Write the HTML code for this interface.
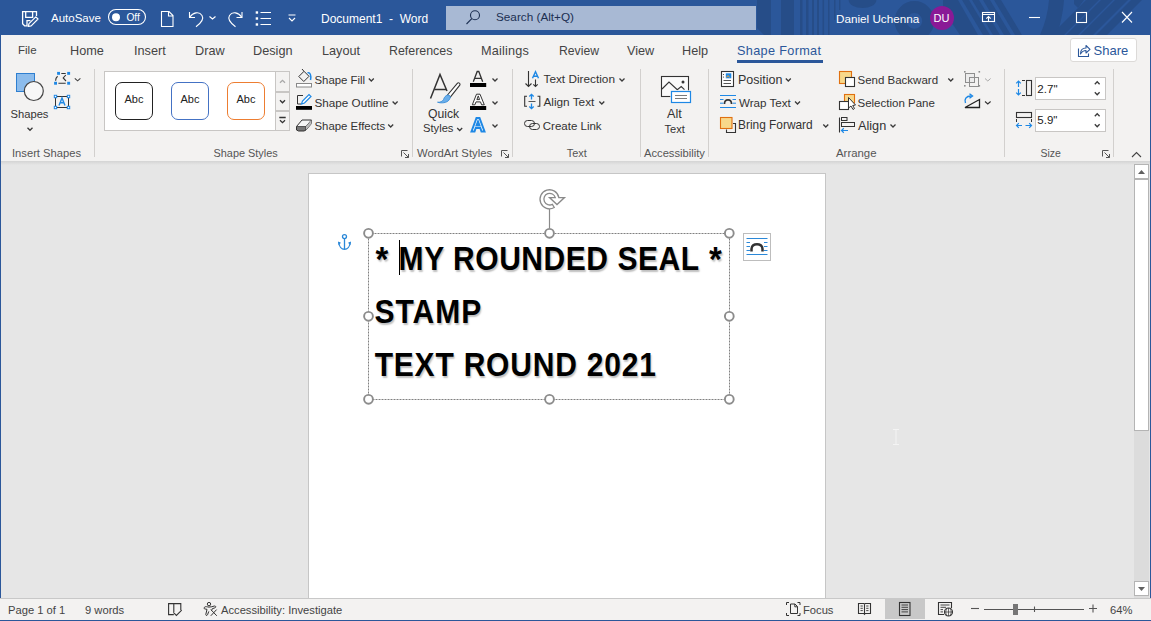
<!DOCTYPE html>
<html><head><meta charset="utf-8">
<style>
*{box-sizing:border-box}
html,body{margin:0;padding:0;width:1151px;height:621px;overflow:hidden;background:#e6e6e6;font-family:"Liberation Sans",sans-serif}
.a{position:absolute}
.t{position:absolute;white-space:pre;line-height:1}
#title{left:0;top:0;width:1151px;height:35px;background:#2b579a}
#tabs{left:1px;top:35px;width:1149px;height:32px;background:#f3f2f1}
#ribbon{left:1px;top:67px;width:1149px;height:94px;background:#f3f2f1}
#shadow{left:1px;top:161px;width:1149px;height:4px;background:linear-gradient(#d4d4d4,#e6e6e6)}
#status{left:0;top:598px;width:1151px;height:23px;background:#f3f2f1;border-top:1px solid #c8c8c8;border-bottom:1px solid #2b579a}
.wt{color:#fff}
.tab{color:#444;font-size:12.7px;top:45px !important}
.rb{color:#333;font-size:11.5px}
.gl{color:#555;font-size:11.2px}
.st{color:#444;font-size:11.2px}
.tx{font-size:30px;font-weight:bold;color:#000;text-shadow:1.2px 1.5px 1.5px rgba(0,0,0,0.25);transform:scaleY(1.08);transform-origin:0 25.4px}
.sep{position:absolute;width:1px;background:#d2d0ce}
svg{position:absolute;overflow:visible}
</style></head><body>
<div class="a" style="left:0;top:0;width:1px;height:621px;background:#2b579a"></div>
<div class="a" style="left:1150px;top:0;width:1px;height:621px;background:#2b579a"></div>

<!-- TITLE BAR -->
<div id="title" class="a"></div>
<svg style="left:0;top:0" width="1151" height="35">
 <g fill="#264d88">
  <path d="M757,0 H771 V35 H764 L757,28 Z"/><rect x="781" y="0" width="13" height="35"/>
  <rect x="800" y="0" width="2.5" height="35"/><rect x="806" y="0" width="2.5" height="35"/>
  <rect x="812" y="0" width="2" height="35"/><rect x="817" y="0" width="2" height="35"/>
  <rect x="822.5" y="0" width="1.6" height="35"/><rect x="828" y="0" width="1.5" height="35"/>
  <rect x="834" y="0" width="1.5" height="20"/><rect x="839" y="0" width="1.4" height="10"/>
  <path d="M848.6,0 A13.9,8 0 0 0 876.4,0 Z"/>
 </g>
 <circle cx="914.4" cy="20.9" r="13.8" fill="none" stroke="#264d88" stroke-width="12"/>
 <g fill="#264d88">
  <path d="M943,0 H958 L978,35 H960 L943,10 Z"/>
  <path d="M962,0 H969 L990,35 H983 Z"/><path d="M972,0 H979 L1000,35 H993 Z"/>
  <path d="M983,0 H990 L1011,35 H1004 Z"/><path d="M994,0 H1001 L1022,35 H1015 Z"/>
  <path d="M1049,0 H1064 C1063,14 1060,25 1057,35 H1040 C1045,24 1048,12 1049,0 Z"/>
  <path d="M1074,0 H1084 L1078,8 L1074,4 Z"/>
  <path d="M1086,0 H1099 L1064,35 H1051 Z"/><path d="M1101,0 H1113 L1078,35 H1066 Z"/>
  <path d="M1115,0 H1128 L1093,35 H1080 Z"/><path d="M1131,0 H1142 L1107,35 H1096 Z"/>
 </g>
</svg>
<div class="a" id="search" style="left:446px;top:6px;width:310px;height:24px;background:#a8b9d4"></div>
<svg style="left:0;top:0" width="1151" height="35" fill="none" stroke="#fff" stroke-width="1.1">
 <!-- save icon -->
 <path d="M36.5,16 V11.6 H22.6 V23.8 L24.6,25.8 H27 V20.6 H30.5" stroke-width="1.3"/>
 <path d="M25.7,11.8 V17.3 H32.6 V11.8" stroke-width="1.3"/>
 <path d="M28.2,26.4 L29,23.6 L35.8,16.8 L38,19 L31.2,25.8 Z" stroke-width="1.2" stroke-linejoin="round"/>
 <!-- toggle -->
 <rect x="108.5" y="9.5" width="37" height="15" rx="7.5" />
 <circle cx="116" cy="17.2" r="4" fill="#fff" stroke="none"/>
 <!-- new doc -->
 <path d="M161.5,11.5 H169 L173,15.5 V26.5 H161.5 Z M168.5,11.5 V16 H173" />
 <!-- undo -->
 <path d="M189.5,12 V17.5 H195" />
 <path d="M189.8,17.3 C193,12.5 199,11 202,15.5 C204.5,19.5 201,23 196,26.7" />
 <path d="M209.5,16.5 L212.5,19 L215.5,16.5" />
 <!-- redo -->
 <path d="M242,12 V17.5 H236.5" />
 <path d="M241.7,17.3 C238.5,12.5 232.5,11 229.5,15.5 C227,19.5 230.5,23 235.5,26.7" />
 <!-- list -->
 <path d="M260.5,12.5 H271 M260.5,18.5 H271 M260.5,24.5 H271" />
 <rect x="255.7" y="11.3" width="2.4" height="2.4" fill="#fff" stroke="none"/>
 <rect x="255.7" y="17.3" width="2.4" height="2.4" fill="#fff" stroke="none"/>
 <rect x="255.7" y="23.3" width="2.4" height="2.4" fill="#fff" stroke="none"/>
 <!-- customize -->
 <path d="M288.5,15 H295.5 M289,18 L292,21 L295,18" />
 <!-- search magnifier -->
 <g stroke="#1c2f52"><circle cx="475" cy="15.3" r="4.5"/><path d="M471.8,18.6 L466.5,24" /></g>
 <!-- display options -->
 <rect x="982.5" y="12.5" width="12" height="9" />
 <path d="M982.5,14.5 H994.5 M988.5,16.5 V21.5 M986.3,18.7 L988.5,16.5 L990.7,18.7" />
 <!-- min max close -->
 <path d="M1029,17.5 H1040" />
 <rect x="1076.5" y="12.5" width="10" height="10" />
 <path d="M1122,12 L1132,22.5 M1132,12 L1122,22.5" />
</svg>
<div class="t wt" style="left:126.4px;top:12.6px;font-size:10.2px">Off</div>
<div class="a" style="left:930px;top:6px;width:24px;height:24px;border-radius:50%;background:#8a1a96"></div>
<div class="t wt" style="left:933.5px;top:12.7px;font-size:11px">DU</div>
<div class="t wt" style="left:51px;top:13px;font-size:11.5px">AutoSave</div>
<div class="t wt" style="left:321px;top:13.3px;font-size:12px">Document1  -  Word</div>
<div class="t" style="left:496px;top:11.3px;font-size:11.75px;color:#1c2f52">Search (Alt+Q)</div>
<div class="t wt" style="left:836px;top:12.5px;font-size:11.7px">Daniel Uchenna</div>

<!-- TABS -->
<div id="tabs" class="a"></div>
<div class="t tab" style="left:18px;top:44px;font-size:11.5px">File</div>
<div class="t tab" style="left:70px;top:44px">Home</div>
<div class="t tab" style="left:134px;top:44px">Insert</div>
<div class="t tab" style="left:195px;top:44px">Draw</div>
<div class="t tab" style="left:253px;top:44px">Design</div>
<div class="t tab" style="left:322px;top:44px">Layout</div>
<div class="t tab" style="left:389px;top:44px;font-size:12.4px">References</div>
<div class="t tab" style="left:481px;top:44px;letter-spacing:0.2px">Mailings</div>
<div class="t tab" style="left:559px;top:44px;font-size:12.2px">Review</div>
<div class="t tab" style="left:627px;top:44px">View</div>
<div class="t tab" style="left:682px;top:44px">Help</div>
<div class="t tab" style="left:737px;top:44px;color:#2b579a;letter-spacing:0.33px">Shape Format</div>
<div class="a" style="left:737px;top:60px;width:86px;height:3px;background:#2b579a"></div>

<!-- RIBBON -->
<div id="ribbon" class="a"></div>
<div id="shadow" class="a"></div>
<!-- separators -->
<div class="sep" style="left:94px;top:69px;height:88px"></div>
<div class="sep" style="left:412px;top:69px;height:88px"></div>
<div class="sep" style="left:512px;top:69px;height:88px"></div>
<div class="sep" style="left:640px;top:69px;height:88px"></div>
<div class="sep" style="left:708px;top:69px;height:88px"></div>
<div class="sep" style="left:1004px;top:69px;height:88px"></div>
<div class="sep" style="left:1113px;top:69px;height:88px"></div>

<!-- Insert Shapes group -->
<svg style="left:0;top:60px" width="100" height="100">
 <rect x="16.5" y="13.5" width="18" height="18" fill="#8cbcec" stroke="#2e7fd0" stroke-width="1"/>
 <circle cx="33.8" cy="31" r="9.5" fill="#f7f7f7" stroke="#444" stroke-width="1.2"/>
 <path d="M27.5,67.8 L30,70.3 L32.5,67.8" fill="none" stroke="#3a3a3a" stroke-width="1.3"/>
 <!-- edit shape -->
 <path d="M61.3,13.5 H65.7 M58.4,23.3 H65.7 M57.6,16.2 C56,17.5 55.6,19 55.6,20.8 M65.8,15 L63.2,18 L66,21" fill="none" stroke="#333" stroke-width="1.1"/>
 <g fill="#1e88e5"><rect x="57.1" y="11.9" width="2.9" height="2.9"/><rect x="67.2" y="11.9" width="2.9" height="2.9"/><rect x="54.1" y="21.8" width="2.9" height="2.9"/><rect x="67.2" y="21.8" width="2.9" height="2.9"/></g>
 <path d="M74.8,18.3 L77.6,20.8 L80.4,18.3" fill="none" stroke="#444" stroke-width="1.1"/>
 <!-- text box -->
 <rect x="55.5" y="36.5" width="13" height="11" fill="none" stroke="#333" stroke-width="1"/>
 <g fill="#fff" stroke="#1e88e5" stroke-width="1"><rect x="54.3" y="35.3" width="2.4" height="2.4"/><rect x="67.3" y="35.3" width="2.4" height="2.4"/><rect x="54.3" y="46.3" width="2.4" height="2.4"/><rect x="67.3" y="46.3" width="2.4" height="2.4"/></g>
 <path d="M59,45.5 L62,38 L65,45.5 M60.2,42.8 H63.8" fill="none" stroke="#1e88e5" stroke-width="1.4"/>
</svg>
<div class="t rb" style="left:10.5px;top:108.5px;font-size:11.2px">Shapes</div>
<div class="t gl" style="left:12px;top:147.5px;font-size:11.2px">Insert Shapes</div>

<!-- Shape Styles group -->
<div class="a" style="left:104px;top:71px;width:186px;height:60px;background:#fff;border:1px solid #c8c6c4"></div>
<div class="a" style="left:275px;top:71px;width:15px;height:21px;border:1px solid #c8c6c4;background:#f3f2f1"></div>
<div class="a" style="left:275px;top:92px;width:15px;height:19px;border:1px solid #c8c6c4;background:#f3f2f1"></div>
<div class="a" style="left:275px;top:111px;width:15px;height:20px;border:1px solid #c8c6c4;background:#f3f2f1"></div>
<svg style="left:0;top:60px" width="300" height="100" fill="none">
 <path d="M280,22.8 L282.5,20.3 L285,22.8" stroke="#a8a8a8" stroke-width="1.3"/>
 <path d="M280,40.3 L282.5,42.8 L285,40.3" stroke="#333" stroke-width="1.3"/>
 <path d="M279.3,57.5 H285.7 M280,60.2 L282.5,62.7 L285,60.2" stroke="#333" stroke-width="1.3"/>
</svg>
<div class="a" style="left:115px;top:82px;width:38px;height:38px;border:1.6px solid #222;border-radius:7px"></div>
<div class="a" style="left:171px;top:82px;width:38px;height:38px;border:1.4px solid #4472c4;border-radius:7px"></div>
<div class="a" style="left:227px;top:82px;width:38px;height:38px;border:1.4px solid #ed7d31;border-radius:7px"></div>
<div class="t" style="left:124.5px;top:94px;font-size:11px;color:#222">Abc</div>
<div class="t" style="left:180.5px;top:94px;font-size:11px;color:#222">Abc</div>
<div class="t" style="left:236.5px;top:94px;font-size:11px;color:#222">Abc</div>

<svg style="left:0;top:60px" width="420" height="100" fill="none">
 <!-- shape fill -->
 <path d="M298.8,16.5 L304,11.3 L309,16.3 L303.8,21.5 Z" stroke="#333" stroke-width="1"/>
 <path d="M304,11.3 L302,9" stroke="#333" stroke-width="1"/>
 <path d="M307.5,13 C310,12 311.5,15 310.5,20" stroke="#1e88e5" stroke-width="1.5"/>
 <rect x="296.5" y="23.5" width="15" height="3.5" fill="#fff" stroke="#888" stroke-width="1"/>
 <!-- shape outline -->
 <path d="M303,95.5 H297.5 V104 H301" transform="translate(0,-60)" stroke="#333" stroke-width="1"/>
 <path d="M301.5,44 L302.5,41 L309,34.5 L311,36.5 L304.5,43 Z" fill="#fff" stroke="#1e88e5" stroke-width="1.2"/>
 <rect x="296" y="46" width="16" height="3.8" fill="#000"/>
 <!-- shape effects -->
 <path d="M296.5,66.5 L302,60 H311.5 L306,66.5 Z" fill="#f5f5f5" stroke="#333" stroke-width="1"/>
 <path d="M296.5,66.5 V70 L298.5,71 H304 L306,70 V66.5" fill="#777" stroke="#333" stroke-width="1"/>
 <path d="M306,70 L311.5,63.5 V60" fill="#bbb" stroke="#333" stroke-width="1"/>
 <path d="M306,66.5 L311.5,60 V63.5 L306,70 Z" fill="#bbb" stroke="none"/>
 <!-- chevrons -->
 <path d="M368.8,18.5 L371.3,21 L373.8,18.5 M392.6,41.5 L395.1,44 L397.6,41.5 M388.2,64.5 L390.7,67 L393.2,64.5" stroke="#3a3a3a" stroke-width="1.3"/>
 <!-- launcher -->
 <path d="M401.5,96.5 V90.5 H407.5 M403.5,92.5 L408.5,97.5 M408.5,94 V97.5 H405" stroke="#555" stroke-width="1"/>
</svg>
<div class="t rb" style="left:314.5px;top:74.65px;font-size:11.4px">Shape Fill</div>
<div class="t rb" style="left:314.5px;top:97.4px;font-size:11.7px">Shape Outline</div>
<div class="t rb" style="left:314.5px;top:120.65px;font-size:11.4px">Shape Effects</div>
<div class="t gl" style="left:213.5px;top:147.5px;font-size:10.9px">Shape Styles</div>

<!-- WordArt group -->
<svg style="left:0;top:60px" width="520" height="100" fill="none">
 <path d="M430.5,38.5 L440,14.5 L447,31" stroke="#333" stroke-width="1.5"/>
 <path d="M434.5,29.5 H446" stroke="#333" stroke-width="1.5"/>
 <path d="M447.5,35 L457.3,23.3 C458.5,22 460.8,23.6 459.8,25.2 L450.3,37.2 Z" fill="#fff" stroke="#333" stroke-width="1.1" stroke-linejoin="round"/>
 <path d="M449.5,35.5 C447,34 444.5,36.5 443.5,39.5 C442.5,41.5 440,42.5 437.5,42.2 C441,43.5 447,43 449,40 C450.5,38 450.8,36.5 449.5,35.5 Z" fill="#6aaeea" stroke="#2e86d6" stroke-width="0.8"/>
 <path d="M457.2,68 L459.7,70.5 L462.2,68" stroke="#3a3a3a" stroke-width="1.3"/>
 <!-- A1 -->
 <path d="M473.3,21.8 L477.2,11.5 H478.8 L482.7,21.8 M475,18.3 H481" stroke="#333" stroke-width="1.3"/>
 <rect x="470" y="23" width="16.2" height="4" fill="#000"/>
 <!-- A2 outlined -->
 <path d="M472.3,44.8 L476.5,34.2 H480 L484.3,44.8 H481.6 L480.5,41.9 H476 L474.9,44.8 Z M476.9,39.6 H479.6 L478.25,35.9 Z" fill="#fff" stroke="#333" stroke-width="1" fill-rule="evenodd"/>
 <rect x="470" y="46" width="16.2" height="4" fill="#000"/>
 <!-- A3 glow -->
 <path d="M471.5,71.5 L476.5,58 H479.5 L484.5,71.5 H481.5 L480.3,68 H475.7 L474.5,71.5 Z M476.5,65.5 H479.5 L478,61.5 Z" fill="#fff" stroke="#1e88e5" stroke-width="2"/>
 <path d="M492.5,18.5 L495,21 L497.5,18.5 M492.5,41.5 L495,44 L497.5,41.5 M492.5,64.5 L495,67 L497.5,64.5" stroke="#3a3a3a" stroke-width="1.3"/>
 <path d="M501.5,96.5 V90.5 H507.5 M503.5,92.5 L508.5,97.5 M508.5,94 V97.5 H505" stroke="#555" stroke-width="1"/>
</svg>
<div class="t rb" style="left:428px;top:107.8px;font-size:12.2px">Quick</div>
<div class="t rb" style="left:423px;top:123px;font-size:11.2px">Styles</div>
<div class="t gl" style="left:417px;top:147.5px;font-size:11.3px">WordArt Styles</div>

<!-- Text group -->
<svg style="left:0;top:60px" width="660" height="100" fill="none">
 <path d="M528.5,11 V26.5 M525.5,23.5 L528.5,26.5 L531.5,23.5" stroke="#333" stroke-width="1.1"/>
 <path d="M532.5,18.3 L535.5,11.6 L538.5,18.3 M533.6,16.2 H537.4" stroke="#1e88e5" stroke-width="1.4"/>
 <path d="M535.5,19.5 V26.5 M533.3,24.3 L535.5,26.5 L537.7,24.3" stroke="#333" stroke-width="1.1"/>
 <!-- align text -->
 <path d="M527,36.3 H524.7 V46.2 H527 M537.5,36.3 H539.8 V46.2 H537.5" stroke="#333" stroke-width="1.1"/>
 <path d="M528.5,41.5 H535.5" stroke="#555" stroke-width="1"/>
 <path d="M531.5,34.5 V39.5 M529.3,36.5 L531.5,34.3 L533.7,36.5 M531.5,43.5 V48.5 M529.3,46.5 L531.5,48.7 L533.7,46.5" stroke="#1e88e5" stroke-width="1.3"/>
 <!-- create link -->
 <rect x="524.5" y="60.5" width="10" height="6" rx="3" stroke="#333" stroke-width="1"/>
 <rect x="529.5" y="63.5" width="10" height="6" rx="3" stroke="#333" stroke-width="1"/>
 <path d="M619.5,18.5 L622,21 L624.5,18.5 M599.3,41.5 L601.8,44 L604.3,41.5" stroke="#3a3a3a" stroke-width="1.3"/>
</svg>
<div class="t rb" style="left:543.5px;top:74.31px;font-size:11.8px">Text Direction</div>
<div class="t rb" style="left:543.4px;top:97.31px;font-size:11.8px">Align Text</div>
<div class="t rb" style="left:542.8px;top:120.57px;font-size:11.5px">Create Link</div>
<div class="t gl" style="left:566.8px;top:147.5px;font-size:10.9px">Text</div>

<!-- Accessibility group -->
<svg style="left:0;top:60px" width="720" height="100" fill="none">
 <rect x="661.5" y="16.5" width="27" height="20" fill="#fafafa" stroke="#333" stroke-width="1.1"/>
 <path d="M662,29 L669,22 L677.3,29.7 L681.2,26.5 L684.5,29.7" stroke="#333" stroke-width="1.1"/>
 <circle cx="683" cy="22" r="1.5" fill="#333"/>
 <rect x="670.3" y="30.3" width="21.4" height="13.4" fill="#f3f2f1" stroke="none"/><rect x="671.5" y="31.5" width="19" height="11" fill="#fff" stroke="#1e88e5" stroke-width="1.2"/>
 <path d="M675,35.5 H687 M675,38.5 H687" stroke="#6b6b6b" stroke-width="0.9"/>
</svg>
<div class="t rb" style="left:667px;top:107.8px;font-size:12.7px">Alt</div>
<div class="t rb" style="left:664.5px;top:124.3px;font-size:11.1px">Text</div>
<div class="t gl" style="left:644px;top:147.5px;font-size:11.2px">Accessibility</div>

<!-- Arrange group -->
<svg style="left:0;top:60px" width="1010" height="100" fill="none">
 <!-- position -->
 <rect x="721.5" y="11.5" width="12" height="15" fill="#fff" stroke="#333" stroke-width="1.1"/>
 <rect x="725.8" y="13.3" width="5.5" height="5" fill="#1e88e5"/>
 <path d="M726.5,17.5 L728,15.5 L729.5,17.5" stroke="#f0a030" stroke-width="1"/>
 <path d="M723.5,20.5 H731 M723.5,23.5 H731" stroke="#555" stroke-width="1"/>
 <circle cx="723.5" cy="14.5" r="0.6" fill="#333"/><circle cx="723.5" cy="17" r="0.6" fill="#333"/>
 <!-- wrap text -->
 <path d="M720,35.5 H736 M720,47.5 H736 M720,39.5 H723.5 M732.5,39.5 H736 M720,43.2 H723.5 M732.5,43.2 H736" stroke="#1e88e5" stroke-width="1"/>
 <path d="M724.5,44 C724.5,38.5 731.5,38.5 731.5,44" stroke="#333" stroke-width="1.6"/>
 <!-- bring forward -->
 <path d="M733,63.5 H735.5 V72.5 H726.5 V69.5" stroke="#333" stroke-width="1.1"/>
 <rect x="720.5" y="57.5" width="11.5" height="11" fill="#f8d88a" stroke="#e07010" stroke-width="1.1"/>
 <path d="M823.3,64.5 L825.8,67 L828.3,64.5" stroke="#3a3a3a" stroke-width="1.3"/>
 <!-- send backward -->
 <rect x="839.5" y="11.5" width="12" height="12" fill="#f8d88a" stroke="#e07010" stroke-width="1.1"/>
 <rect x="845.5" y="17.5" width="9" height="9" fill="#fff" stroke="#333" stroke-width="1.1"/>
 <path d="M948.3,18.5 L950.8,21 L953.3,18.5" stroke="#3a3a3a" stroke-width="1.3"/>
 <!-- selection pane -->
 <rect x="844.5" y="34.5" width="10" height="8.5" fill="#f8d88a" stroke="#e07010" stroke-width="1.1"/>
 <rect x="839.5" y="41.5" width="9" height="8" fill="#fff" stroke="#333" stroke-width="1.1"/>
 <path d="M848.5,37.5 V48 L851,46 L853,49.5 L854.5,48.5 L852.7,45.5 L855.5,45 Z" fill="#fff" stroke="#333" stroke-width="1"/>
 <!-- align -->
 <path d="M839.5,57.5 V72.5" stroke="#333" stroke-width="1.1"/>
 <rect x="841.5" y="57.5" width="5.5" height="3" stroke="#333" stroke-width="1"/>
 <rect x="841.5" y="62.5" width="13" height="4" stroke="#333" stroke-width="1"/>
 <path d="M841.5,70.5 H848 M843.8,68.3 L841.5,70.5 L843.8,72.7" stroke="#1e88e5" stroke-width="1.2"/>
 <path d="M890.5,64.5 L893,67 L895.5,64.5 M785.8,18.5 L788.3,21 L790.8,18.5 M795,41.5 L797.5,44 L800,41.5" stroke="#3a3a3a" stroke-width="1.3"/>
 <!-- group (disabled) -->
 <g stroke="#8e8e8e" stroke-width="1"><rect x="965.5" y="13.5" width="9" height="9" fill="#ececec"/><rect x="969.5" y="17.5" width="9" height="9"/></g>
 <g fill="#8e8e8e"><rect x="964" y="11" width="1.6" height="1.6"/><rect x="978.5" y="11" width="1.6" height="1.6"/><rect x="964" y="25" width="1.6" height="1.6"/><rect x="978.5" y="25" width="1.6" height="1.6"/></g>
 <path d="M985,18.5 L987.8,21 L990.6,18.5" stroke="#aaa" stroke-width="1"/>
 <!-- rotate -->
 <path d="M965.5,43 C964,39.5 966,36 971,36" stroke="#1e88e5" stroke-width="1.4"/>
 <path d="M969.5,33.8 L972.5,36 L969.5,38.3" stroke="#1e88e5" stroke-width="1.4"/>
 <path d="M965,47.5 L979.5,39.5 V47.5 Z" fill="#f5f5f5" stroke="#222" stroke-width="1.3"/>
 <path d="M985,41.5 L987.8,44 L990.6,41.5" stroke="#333" stroke-width="1.1"/>
</svg>
<div class="t rb" style="left:738px;top:73.72px;font-size:12.5px">Position</div>
<div class="t rb" style="left:739px;top:97.48px;font-size:11.6px">Wrap Text</div>
<div class="t rb" style="left:738px;top:120.23px;font-size:11.9px">Bring Forward</div>
<div class="t rb" style="left:857.5px;top:74.57px;font-size:11.5px">Send Backward</div>
<div class="t rb" style="left:857.5px;top:97.57px;font-size:11.5px">Selection Pane</div>
<div class="t rb" style="left:858px;top:119.55px;font-size:12.7px">Align</div>
<div class="t gl" style="left:836px;top:147.5px;font-size:11.4px">Arrange</div>

<!-- Size group -->
<div class="a" style="left:1035px;top:77px;width:71px;height:23px;background:#fff;border:1px solid #c8c6c4"></div>
<div class="a" style="left:1035px;top:109px;width:71px;height:23px;background:#fff;border:1px solid #c8c6c4"></div>
<svg style="left:0;top:60px" width="1151" height="100" fill="none">
 <path d="M1018.5,21 V27 M1016.2,23.3 L1018.5,21 L1020.8,23.3 M1018.5,29 V35 M1016.2,32.7 L1018.5,35 L1020.8,32.7" stroke="#1e88e5" stroke-width="1.2"/>
 <path d="M1022,20.5 H1025 M1022,35.5 H1025" stroke="#333" stroke-width="1"/>
 <rect x="1026.5" y="20.5" width="5" height="15" stroke="#333" stroke-width="1.1"/>
 <rect x="1016.5" y="52.5" width="15" height="5" stroke="#333" stroke-width="1.1"/>
 <path d="M1016.5,59 V62 M1031.5,59 V62" stroke="#333" stroke-width="1"/>
 <path d="M1016.5,65.5 H1022 M1018.8,63.2 L1016.5,65.5 L1018.8,67.8 M1025.5,65.5 H1031.5 M1029.2,63.2 L1031.5,65.5 L1029.2,67.8" stroke="#1e88e5" stroke-width="1.2"/>
 <path d="M1094.8,24.3 L1097.2,21.8 L1099.6,24.3 M1094.8,32.3 L1097.2,34.8 L1099.6,32.3" stroke="#3a3a3a" stroke-width="1.3"/>
 <path d="M1094.8,56.3 L1097.2,53.8 L1099.6,56.3 M1094.8,64.3 L1097.2,66.8 L1099.6,64.3" stroke="#3a3a3a" stroke-width="1.3"/>
 <path d="M1102.5,96.5 V90.5 H1108.5 M1104.5,92.5 L1109.5,97.5 M1109.5,94 V97.5 H1106" stroke="#555" stroke-width="1"/>
 <path d="M1132,97 L1136.5,92.5 L1141,97" stroke="#444" stroke-width="1.1"/>
</svg>
<div class="t" style="left:1037.3px;top:83.3px;font-size:11.6px;color:#222">2.7"</div>
<div class="t" style="left:1037.3px;top:114.5px;font-size:11.5px;color:#222">5.9"</div>
<div class="t gl" style="left:1040.5px;top:147.5px;font-size:10.5px">Size</div>

<!-- Share button -->
<div class="a" style="left:1070px;top:38px;width:67px;height:24px;background:#fff;border:1px solid #dcdad8;border-radius:3px"></div>
<svg style="left:0;top:0" width="1151" height="70" fill="none">
 <path d="M1078.5,48.5 V56.5 H1088.5 V53.5" stroke="#2b579a" stroke-width="1.1"/>
 <path d="M1080.5,54 C1080.5,50 1083,48 1086,48 V45.5 L1090,49.3 L1086,53 V50.5 C1084,50.5 1082,51.5 1080.5,54 Z" stroke="#2b579a" stroke-width="1.1" stroke-linejoin="round"/>
</svg>
<div class="t" style="left:1093.5px;top:43.5px;font-size:13px;color:#2b579a">Share</div>


<!-- DOC -->
<div class="a" id="page" style="left:308px;top:173px;width:518px;height:430px;background:#fff;border:1px solid #c6c6c6;border-bottom:none"></div>
<!-- scrollbar -->
<div class="a" style="left:1134px;top:164px;width:15px;height:434px;background:#dcdcdc"></div>
<div class="a" style="left:1134px;top:164px;width:15px;height:15px;background:#fff;border:1px solid #b4b4b4"></div>
<div class="a" style="left:1134px;top:179px;width:15px;height:252px;background:#fff;border:1px solid #b4b4b4"></div>
<div class="a" style="left:1134px;top:581px;width:15px;height:15px;background:#fff;border:1px solid #b4b4b4"></div>
<svg style="left:0;top:0" width="1151" height="621">
 <path d="M1138,174 L1141.5,170 L1145,174 Z" fill="#606060"/>
 <path d="M1138,587 L1141.5,591 L1145,587 Z" fill="#606060"/>
 <!-- I-beam cursor -->
 <path d="M893,429.5 H899 M893,444.5 H899 M896,429.5 V444.5" stroke="#f4f4f4" stroke-width="1"/>
</svg>
<!-- text lines -->
<div class="t tx" style="left:375.5px;top:243px;font-size:33px">*</div>
<div class="t tx" style="left:398.6px;top:245px;letter-spacing:0.55px">MY ROUNDED SEAL</div>
<div class="t tx" style="left:709px;top:243px;font-size:33px">*</div>
<div class="t tx" style="left:374.6px;top:297.6px;letter-spacing:0.95px">STAMP</div>
<div class="t tx" style="left:374.7px;top:351px;letter-spacing:0.79px">TEXT ROUND 2021</div>
<div class="a" style="left:399px;top:240px;width:1px;height:35px;background:#000"></div>
<svg style="left:0;top:0" width="1151" height="621" fill="none">
 <rect x="368.5" y="233.5" width="361" height="166" stroke="#808080" stroke-width="1" stroke-dasharray="2,1"/>
 <path d="M549.5,209 V228" stroke="#8a8a8a" stroke-width="1.2"/>
 <g fill="#fff" stroke="#8c8c8c" stroke-width="1.9">
  <circle cx="368.5" cy="233.3" r="4.4"/><circle cx="549.5" cy="233.3" r="4.4"/><circle cx="729.3" cy="233.3" r="4.4"/>
  <circle cx="368.5" cy="316.3" r="4.4"/><circle cx="729.3" cy="316.3" r="4.4"/>
  <circle cx="368.5" cy="399.3" r="4.4"/><circle cx="549.5" cy="399.3" r="4.4"/><circle cx="729.3" cy="399.3" r="4.4"/>
 </g>
 <!-- rotate handle -->
 <path d="M554.25,207.5 A9.5,9.5 0 1 1 558.86,197.6 L564.5,197.6 L557,204.6 L549.5,197.6 L555.3,197.6 A5.8,5.8 0 1 0 552.4,204.3 Z" fill="#fff" stroke="#8a8a8a" stroke-width="1.3" stroke-linejoin="miter"/>
 <!-- anchor -->
 <g stroke="#2b88d8" stroke-width="1.3" fill="none">
  <circle cx="344.5" cy="236.6" r="2"/>
  <path d="M344.5,238.6 V249.5 M338.8,242 C339,246.5 341.5,249.4 344.5,249.4 C347.5,249.4 350,246.5 350.2,242"/>
 </g>
 <path d="M338,241.5 L341,242.8 L338.6,245.3 Z M351,241.5 L348,242.8 L350.4,245.3 Z" fill="#2b88d8"/>
 <!-- layout options -->
 <rect x="743.5" y="233.5" width="27" height="27" fill="#fff" stroke="#bdbdbd" stroke-width="1"/>
 <path d="M746.5,238.5 H767.5 M746.5,254.5 H767.5 M746.5,242.5 H750 M764,242.5 H767.5 M746.5,246.5 H750 M764,246.5 H767.5 M746.5,250.5 H750 M764,250.5 H767.5" stroke="#2b88d8" stroke-width="1"/>
 <path d="M751.5,251.5 V249 C751.5,242.5 762.5,242.5 762.5,249 V251.5" stroke="#333" stroke-width="2.5"/>
</svg>

<!-- STATUS -->
<div id="status" class="a"></div>
<svg style="left:0;top:0" width="1151" height="621" fill="none">
 <!-- proofing book -->
 <path d="M173.8,614.6 H168.6 V603.6 H180.8 V610 M173.8,603.6 V612" stroke="#333" stroke-width="1.1"/>
 <path d="M173.3,612.4 L176.4,615.4 L181.7,610.1" stroke="#333" stroke-width="1.1"/>
 <!-- accessibility -->
 <circle cx="209" cy="604.1" r="1.7" stroke="#333" stroke-width="1"/>
 <path d="M204.3,607.4 C205.5,606 207.2,607 209,607.1 C211,607.2 212.8,606.4 214.4,606 C215.9,605.7 216.3,607.4 214.9,607.8 L212.2,608.8 L211.6,610.5 M204.3,607.4 C203.5,608.6 204.6,609.1 206,609.1 L207,609.4 L205.8,614.4 C205.6,615.6 207.1,615.9 207.5,614.8 L208.8,611.4" stroke="#333" stroke-width="1"/>
 <path d="M210.8,609.6 L216.8,615.8 M216.6,609.6 L210.8,615.8" stroke="#333" stroke-width="1"/>
 <!-- focus -->
 <path d="M786.5,605 V602.5 H789 M797.5,602.5 H800 V605 M800,613 V615.5 H797.5 M789,615.5 H786.5 V613" stroke="#333" stroke-width="1"/>
 <path d="M790.5,613.5 V604 H795 L797.5,606.5 V613.5 Z M794.8,604 V606.8 H797.5" stroke="#333" stroke-width="1"/>
</svg>
<div class="a" style="left:885px;top:599px;width:40px;height:20px;background:#c8c8c8"></div>
<svg style="left:0;top:0" width="1151" height="621" fill="none">
 <!-- read mode -->
 <path d="M858.5,603.5 H863.8 L864.5,604.3 L865.2,603.5 H870.5 V613.5 H865.2 L864.5,614.3 L863.8,613.5 H858.5 Z M864.5,604.3 V613.5" stroke="#333" stroke-width="1.1"/>
 <path d="M860.5,606 H862.8 M860.5,608.3 H862.8 M860.5,610.6 H862.8 M866.2,606 H868.5 M866.2,608.3 H868.5 M866.2,610.6 H868.5" stroke="#333" stroke-width="0.9"/>
 <!-- print layout -->
 <rect x="899.5" y="602.5" width="10.5" height="13" stroke="#333" stroke-width="1.1"/>
 <path d="M901.5,605 H908 M901.5,607.3 H908 M901.5,609.6 H908 M901.5,611.9 H908" stroke="#333" stroke-width="0.9"/>
 <!-- web layout -->
 <path d="M944,614.5 H938.5 V602.5 H951.5 V608" stroke="#333" stroke-width="1.1"/>
 <path d="M940.5,605 H949.5 M940.5,607.3 H946 M940.5,609.6 H943 M940.5,611.9 H943" stroke="#333" stroke-width="0.9"/>
 <circle cx="948.5" cy="612" r="4" fill="#f3f2f1" stroke="#333" stroke-width="1.1"/>
 <path d="M944.5,612 H952.5 M948.5,608 V616 M946.8,608.5 C945.5,611 945.5,613 946.8,615.5 M950.2,608.5 C951.5,611 951.5,613 950.2,615.5" stroke="#333" stroke-width="0.7"/>
 <!-- zoom -->
 <path d="M971,608.5 H979" stroke="#555" stroke-width="1.1"/>
 <path d="M984,609.5 H1084" stroke="#555" stroke-width="1.1"/>
 <path d="M1034.5,606.5 V612" stroke="#555" stroke-width="1.1"/>
 <path d="M1089,608.5 H1097 M1093,604.5 V612.5" stroke="#555" stroke-width="1.1"/>
</svg>
<div class="a" style="left:1013px;top:604px;width:5px;height:11px;background:#767676"></div>
<div class="t st" style="left:8px;top:605px">Page 1 of 1</div>
<div class="t st" style="left:85px;top:605px">9 words</div>
<div class="t st" style="left:221px;top:605px">Accessibility: Investigate</div>
<div class="t st" style="left:803px;top:605px">Focus</div>
<div class="t st" style="left:1110px;top:605px">64%</div>

</body></html>
